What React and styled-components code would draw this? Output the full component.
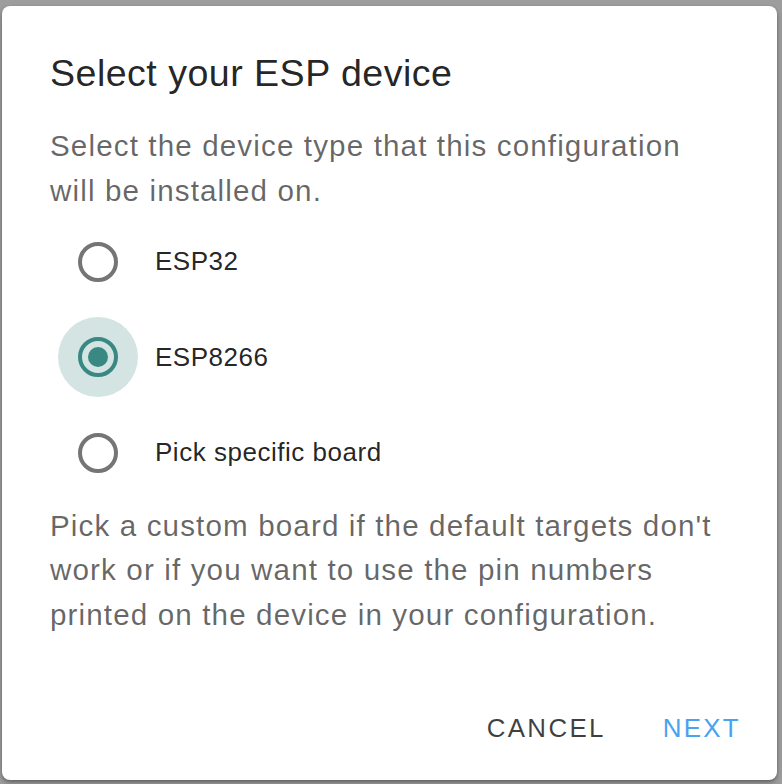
import React, { useState } from "react";
import styled, { createGlobalStyle } from "styled-components";

const GlobalStyle = createGlobalStyle`
  html, body {
    margin: 0;
    padding: 0;
    background: #9d9d9d;
  }
  body {
    font-family: "Liberation Sans", Arial, sans-serif;
    overflow: hidden;
  }
`;

const Scrim = styled.div`
  width: 782px;
  height: 784px;
  padding: 6px 5px 4px 2px;
  box-sizing: border-box;
`;

const Dialog = styled.div`
  width: 775px;
  height: 774px;
  background: #fff;
  border-radius: 8px;
  box-shadow: 0 3px 5px rgba(0, 0, 0, 0.25), 0 1px 3px rgba(0, 0, 0, 0.2);
  display: flex;
  flex-direction: column;
  box-sizing: border-box;
`;

const Content = styled.div`
  flex: 1;
  padding: 45px 46px 0 48px;
`;

const Title = styled.h2`
  margin: 0;
  font-size: 37.6px;
  line-height: 44px;
  font-weight: 400;
  letter-spacing: 0.0125em;
  color: rgba(0, 0, 0, 0.87);
`;

const Text = styled.p`
  margin: ${(p) => p.$top || 0}px 0 0 0;
  font-size: 29.6px;
  line-height: 44.5px;
  letter-spacing: 0.038em;
  color: rgba(0, 0, 0, 0.6);
`;

const Group = styled.div`
  display: flex;
  flex-direction: column;
  margin-top: 1px;
`;

const Row = styled.label`
  display: flex;
  align-items: center;
  height: 95.5px;
  cursor: pointer;
`;

const Ripple = styled.span`
  width: 80px;
  height: 80px;
  margin-left: 8px;
  border-radius: 50%;
  display: flex;
  align-items: center;
  justify-content: center;
  background: ${(p) => (p.$active ? "rgba(56, 133, 129, 0.22)" : "transparent")};
`;

const Ring = styled.span`
  width: 40px;
  height: 40px;
  box-sizing: border-box;
  border-radius: 50%;
  border: 4px solid ${(p) => (p.$checked ? "#3a8884" : "#757575")};
  display: flex;
  align-items: center;
  justify-content: center;
`;

const Dot = styled.span`
  width: 20px;
  height: 20px;
  border-radius: 50%;
  background: #3a8884;
`;

const Label = styled.span`
  margin-left: 17px;
  font-size: 26px;
  letter-spacing: 0.02em;
  color: rgba(0, 0, 0, 0.87);
`;

const Actions = styled.div`
  height: 104px;
  display: flex;
  align-items: center;
  justify-content: flex-end;
  gap: 29px;
  padding-right: 22px;
`;

const Button = styled.button`
  border: none;
  background: transparent;
  height: 72px;
  padding: 0 14px;
  font-family: inherit;
  font-size: 25.9px;
  letter-spacing: 0.0893em;
  text-transform: uppercase;
  color: ${(p) => (p.$primary ? "#4aa3ee" : "rgba(0, 0, 0, 0.75)")};
  cursor: pointer;
`;

const options = [
  { id: "esp32", label: "ESP32" },
  { id: "esp8266", label: "ESP8266" },
  { id: "custom", label: "Pick specific board" },
];

export default function App() {
  const [value, setValue] = useState("esp8266");
  return (
    <>
      <GlobalStyle />
      <Scrim>
        <Dialog>
          <Content>
            <Title>Select your ESP device</Title>
            <Text $top={29}>
              Select the device type that this configuration will be installed on.
            </Text>
            <Group>
              {options.map((o) => (
                <Row key={o.id} onClick={() => setValue(o.id)}>
                  <Ripple $active={value === o.id}>
                    <Ring $checked={value === o.id}>
                      {value === o.id && <Dot />}
                    </Ring>
                  </Ripple>
                  <Label>{o.label}</Label>
                </Row>
              ))}
            </Group>
            <Text $top={3}>
              Pick a custom board if the default targets don't work or if you
              want to use the pin numbers printed on the device in your
              configuration.
            </Text>
          </Content>
          <Actions>
            <Button>Cancel</Button>
            <Button $primary>Next</Button>
          </Actions>
        </Dialog>
      </Scrim>
    </>
  );
}
